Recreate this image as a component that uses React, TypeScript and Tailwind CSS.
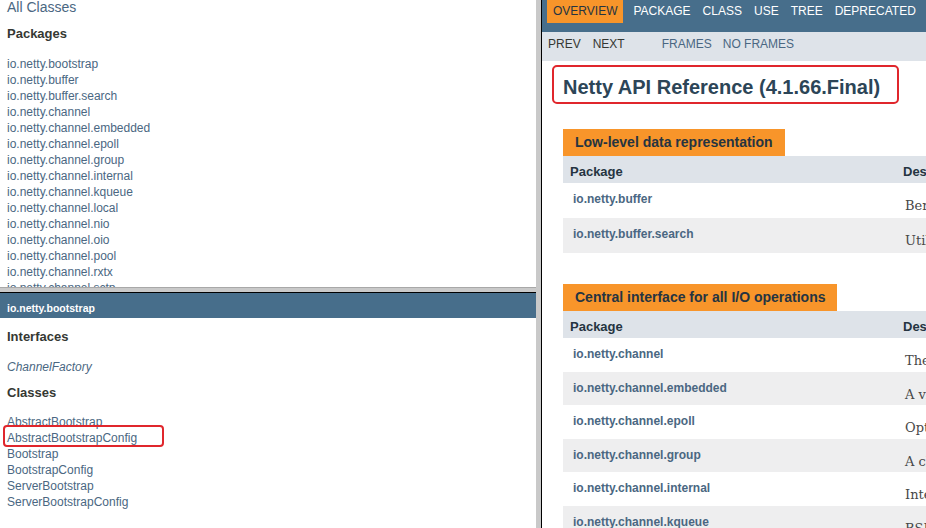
import React from "react";

const packages = [
  "io.netty.bootstrap",
  "io.netty.buffer",
  "io.netty.buffer.search",
  "io.netty.channel",
  "io.netty.channel.embedded",
  "io.netty.channel.epoll",
  "io.netty.channel.group",
  "io.netty.channel.internal",
  "io.netty.channel.kqueue",
  "io.netty.channel.local",
  "io.netty.channel.nio",
  "io.netty.channel.oio",
  "io.netty.channel.pool",
  "io.netty.channel.rxtx",
  "io.netty.channel.sctp",
  "io.netty.channel.socket",
];

const classes = [
  "AbstractBootstrap",
  "AbstractBootstrapConfig",
  "Bootstrap",
  "BootstrapConfig",
  "ServerBootstrap",
  "ServerBootstrapConfig",
];

const table1 = [
  ["io.netty.buffer", "Berichtet über eine Abstraktion eines Bytepuffers."],
  ["io.netty.buffer.search", "Utility classes for byte buffer search."],
];

const table2 = [
  ["io.netty.channel", "The core channel API which is asynchronous and event-driven."],
  ["io.netty.channel.embedded", "A virtual Channel that helps wrapping a series of handlers."],
  ["io.netty.channel.epoll", "Optimized transport for linux which uses EPOLL Edge-Triggered Mode."],
  ["io.netty.channel.group", "A channel registry which helps a user maintain the list of open channels."],
  ["io.netty.channel.internal", "Internal utilities for channel implementations."],
  ["io.netty.channel.kqueue", "BSD specific transport."],
];

function SummaryTable({
  caption,
  captionW,
  rows,
  rowH,
}: {
  caption: string;
  captionW: string;
  rows: string[][];
  rowH: string;
}) {
  return (
    <div className="w-[720px]">
      <div
        className={`${captionW} h-[27px] bg-[#f8952a] pl-[12px] pt-[5px] text-[14px] leading-[16px] font-bold text-[#253441]`}
      >
        {caption}
      </div>
      <div className="grid grid-cols-[333px_1fr] bg-[#dee3e9] h-[27px] text-[13px] leading-[16px] font-bold text-[#253441]">
        <div className="pl-[7px] pt-[8px]">Package</div>
        <div className="pl-[7px] pt-[8px]">Description</div>
      </div>
      {rows.map(([name, desc], i) => (
        <div
          key={name}
          className={`grid grid-cols-[333px_1fr] ${rowH} ${i % 2 === 0 ? "bg-white" : "bg-[#eeeeef]"}`}
        >
          <div className="pl-[10px] pt-[9px] text-[12px] leading-[14px] font-bold text-[#4a6782]">
            {name}
          </div>
          <div className="pl-[9px] pt-[15px] text-[13px] leading-[16px] text-[#474747] whitespace-nowrap font-['DejaVu_Serif',Georgia,serif]">
            {desc}
          </div>
        </div>
      ))}
    </div>
  );
}

export default function App() {
  return (
    <div className="w-[926px] h-[528px] flex overflow-hidden bg-white font-['Liberation_Sans',Arial,sans-serif] text-[#353833]">
      {/* Left frames */}
      <div className="w-[536px] h-full flex flex-col">
        <div className="h-[287px] overflow-hidden pl-[7px]">
          <div className="text-[14px] leading-[14px] text-[#4a6782]">All Classes</div>
          <div className="mt-[12px] text-[13px] leading-[16px] font-bold text-[#353833]">Packages</div>
          <ul className="mt-[14px]">
            {packages.map((p) => (
              <li key={p} className="text-[12px] leading-[16px] text-[#4a6782]">
                {p}
              </li>
            ))}
          </ul>
        </div>
        <div className="h-[5px] bg-[#c9c9c9] border-t border-[#a8a8a8]" />
        <div className="flex-1 border-t border-black overflow-hidden">
          <div className="h-[25px] bg-[#476e8b] pl-[7px] pt-[9px] text-[10.5px] leading-[12px] font-bold text-white">
            io.netty.bootstrap
          </div>
          <div className="pl-[7px]">
            <div className="mt-[11px] text-[13px] leading-[16px] font-bold">Interfaces</div>
            <div className="mt-[14px] text-[12px] leading-[16px] italic text-[#4a6782]">ChannelFactory</div>
            <div className="mt-[10px] text-[13px] leading-[16px] font-bold">Classes</div>
            <ul className="mt-[13px]">
              {classes.map((c) => (
                <li key={c} className="text-[12px] leading-[16px] text-[#4a6782] relative">
                  {c}
                  {c === "AbstractBootstrapConfig" && (
                    <span className="absolute left-[-4px] top-[-5px] w-[161px] h-[22px] border-2 border-[#e0262c] rounded-[4px]" />
                  )}
                </li>
              ))}
            </ul>
          </div>
        </div>
      </div>

      {/* Divider */}
      <div className="w-[5px] h-full bg-[#c9c9c9]" />
      <div className="w-[1px] h-full bg-black" />

      {/* Right frame */}
      <div className="flex-1 h-full overflow-hidden">
        <div className="h-[32px] bg-[#476e8b] pl-[5px]">
          <ul className="flex whitespace-nowrap text-[12px] leading-[14px] text-white">
            <li className="bg-[#f8952a] text-[#253441] px-[6px] pt-[4px] pb-[5px]">OVERVIEW</li>
            <li className="ml-[4px] px-[6px] pt-[4px] pb-[5px]">PACKAGE</li>
            <li className="px-[6px] pt-[4px] pb-[5px]">CLASS</li>
            <li className="px-[6px] pt-[4px] pb-[5px]">USE</li>
            <li className="px-[6px] pt-[4px] pb-[5px]">TREE</li>
            <li className="px-[6px] pt-[4px] pb-[5px]">DEPRECATED</li>
            <li className="px-[6px] pt-[4px] pb-[5px]">INDEX</li>
            <li className="px-[6px] pt-[4px] pb-[5px]">HELP</li>
          </ul>
        </div>
        <div className="h-[29px] bg-[#dee3e9] pl-[6px] pt-[5px] flex whitespace-nowrap text-[12px] leading-[14px]">
          <span className="text-[#353833]">PREV</span>
          <span className="ml-[12px] text-[#353833]">NEXT</span>
          <span className="ml-[37px] text-[#4a6782]">FRAMES</span>
          <span className="ml-[11px] text-[#4a6782]">NO FRAMES</span>
        </div>
        <div className="pl-[10px] pt-[4px]">
          <h1 className="inline-block w-[347px] h-[39px] border-2 border-[#e0262c] rounded-[5px] pl-[9px] pt-[8px] text-[20px] leading-[24px] font-bold text-[#2c4557] whitespace-nowrap">
            Netty API Reference (4.1.66.Final)
          </h1>
        </div>
        <div className="pl-[21px] pt-[25px]">
          <SummaryTable caption="Low-level data representation" captionW="w-[222px]" rows={table1} rowH="h-[35px]" />
          <div className="h-[31px]" />
          <SummaryTable
            caption="Central interface for all I/O operations"
            captionW="w-[274px]"
            rows={table2}
            rowH="h-[33.6px]"
          />
        </div>
      </div>
    </div>
  );
}
